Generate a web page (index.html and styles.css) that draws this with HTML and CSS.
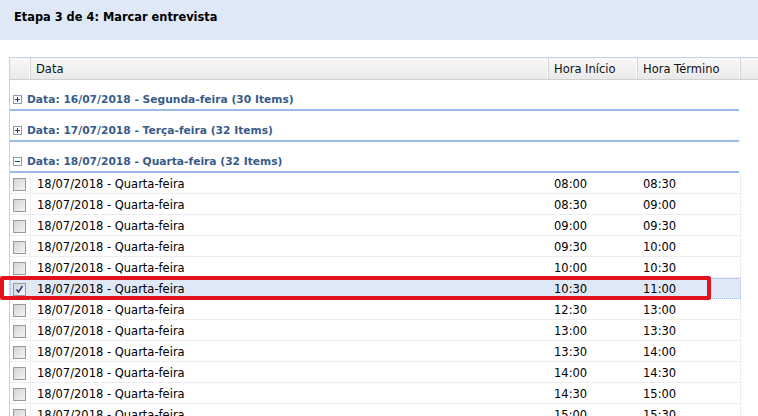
FILE: index.html
```html
<!DOCTYPE html>
<html>
<head>
<meta charset="utf-8">
<link rel="stylesheet" href="styles.css">
</head>
<body>
<div class="title-bar"><span class="title">Etapa 3 de 4: Marcar entrevista</span></div>
<div class="grid">
  <div class="hdr">
    <div class="hc c-chk"></div>
    <div class="hc c-data">Data</div>
    <div class="hc c-ini">Hora Início</div>
    <div class="hc c-fim">Hora Término</div>
    <div class="hc c-rest"></div>
  </div>
  <div class="body">
    <div class="group"><span class="tog plus"></span>Data: 16/07/2018 - Segunda-feira (30 Items)</div>
    <div class="group"><span class="tog plus"></span>Data: 17/07/2018 - Terça-feira (32 Items)</div>
    <div class="group"><span class="tog minus"></span>Data: 18/07/2018 - Quarta-feira (32 Items)</div>
    <div class="row"><div class="c c-chk"><span class="cb"></span></div><div class="c c-data">18/07/2018 - Quarta-feira</div><div class="c c-ini">08:00</div><div class="c c-fim">08:30</div></div>
    <div class="row"><div class="c c-chk"><span class="cb"></span></div><div class="c c-data">18/07/2018 - Quarta-feira</div><div class="c c-ini">08:30</div><div class="c c-fim">09:00</div></div>
    <div class="row"><div class="c c-chk"><span class="cb"></span></div><div class="c c-data">18/07/2018 - Quarta-feira</div><div class="c c-ini">09:00</div><div class="c c-fim">09:30</div></div>
    <div class="row"><div class="c c-chk"><span class="cb"></span></div><div class="c c-data">18/07/2018 - Quarta-feira</div><div class="c c-ini">09:30</div><div class="c c-fim">10:00</div></div>
    <div class="row"><div class="c c-chk"><span class="cb"></span></div><div class="c c-data">18/07/2018 - Quarta-feira</div><div class="c c-ini">10:00</div><div class="c c-fim">10:30</div></div>
    <div class="row sel"><div class="c c-chk"><span class="cb on"><svg viewBox="0 0 13 13" width="13" height="13"><path d="M3.5 6.5 L5.5 9 L9.5 3" fill="none" stroke="#2a3f86" stroke-width="1.6"/></svg></span></div><div class="c c-data">18/07/2018 - Quarta-feira</div><div class="c c-ini">10:30</div><div class="c c-fim">11:00</div><div class="mark"></div></div>
    <div class="row"><div class="c c-chk"><span class="cb"></span></div><div class="c c-data">18/07/2018 - Quarta-feira</div><div class="c c-ini">12:30</div><div class="c c-fim">13:00</div></div>
    <div class="row"><div class="c c-chk"><span class="cb"></span></div><div class="c c-data">18/07/2018 - Quarta-feira</div><div class="c c-ini">13:00</div><div class="c c-fim">13:30</div></div>
    <div class="row"><div class="c c-chk"><span class="cb"></span></div><div class="c c-data">18/07/2018 - Quarta-feira</div><div class="c c-ini">13:30</div><div class="c c-fim">14:00</div></div>
    <div class="row"><div class="c c-chk"><span class="cb"></span></div><div class="c c-data">18/07/2018 - Quarta-feira</div><div class="c c-ini">14:00</div><div class="c c-fim">14:30</div></div>
    <div class="row"><div class="c c-chk"><span class="cb"></span></div><div class="c c-data">18/07/2018 - Quarta-feira</div><div class="c c-ini">14:30</div><div class="c c-fim">15:00</div></div>
    <div class="row"><div class="c c-chk"><span class="cb"></span></div><div class="c c-data">18/07/2018 - Quarta-feira</div><div class="c c-ini">15:00</div><div class="c c-fim">15:30</div></div>
  </div>
</div>
</body>
</html>
```
FILE: styles.css
```css
html, body { margin: 0; padding: 0; background: #fff; overflow: hidden; }
body { font-family: "DejaVu Sans", Verdana, sans-serif; font-size: 11.5px; color: #000; width: 758px; height: 416px; }

.title-bar { height: 40px; background: #dfe8f6; box-sizing: border-box; padding: 10px 0 0 14px; }
.title { font-weight: bold; font-size: 11.4px; line-height: 15px; color: #000; }

.grid { margin: 17px 0 0 9px; border-left: 1px solid #c5d2e4; }

.hdr { display: flex; height: 23px; box-sizing: border-box; border-top: 1px solid #c5d2e4; border-bottom: 1px solid #d0d0d0; background: linear-gradient(#f9f9f9, #e9e9e9); }
.hc { box-sizing: border-box; border-right: 1px solid #d5d5d5; box-shadow: inset -1px 0 0 #fafafa; line-height: 22px; padding-left: 5px; color: #111; white-space: nowrap; }
.hc.c-rest { flex: 1; border-right: none; box-shadow: none; }

.c-chk { width: 21px; flex: none; }
.c-data { width: 518px; flex: none; }
.c-ini { width: 89px; flex: none; }
.c-fim { width: 103px; flex: none; }

.body { width: 731px; }

.group { height: 31px; box-sizing: border-box; border-bottom: 2px solid #99bbe8; display: flex; align-items: center; padding: 9px 0 0 3px; font-weight: bold; font-size: 10.7px; color: #395b8a; width: 729px; white-space: nowrap; }
.tog { width: 9px; height: 9px; box-sizing: border-box; border: 1px solid #8c9cb2; background: #fff; margin-right: 5px; position: relative; flex: none; }
.tog::before { content: ""; position: absolute; left: 1px; top: 3px; width: 5px; height: 1px; background: #1e3c6e; }
.tog.plus::after { content: ""; position: absolute; left: 3px; top: 1px; width: 1px; height: 5px; background: #1e3c6e; }

.row { display: flex; height: 21px; box-sizing: border-box; border-bottom: 1px solid #ededed; border-right: 1px solid #ededed; position: relative; }
.row .c { line-height: 17px; padding-top: 3px; padding-left: 5px; box-sizing: border-box; white-space: nowrap; }
.row .c-chk { border-right: 1px solid #ededed; padding: 2px 0 0 3px; display: flex; align-items: center; }
.row .c-data { padding-left: 6px; }
.row .c-fim { width: 102px; }

.cb { width: 13px; height: 13px; box-sizing: border-box; border: 1px solid #9a9a9a; background: linear-gradient(135deg, #d4d4d4, #f4f4f4); display: block; position: relative; }
.cb svg { position: absolute; left: -1px; top: -1px; }

.row.sel { background: #dfe8f6; outline: 1px dotted #a3bae9; outline-offset: -1px; }
.mark { position: absolute; left: -10px; top: -2px; width: 711px; height: 24px; box-sizing: border-box; border: 4px solid #e2131c; border-radius: 2px; }
```
